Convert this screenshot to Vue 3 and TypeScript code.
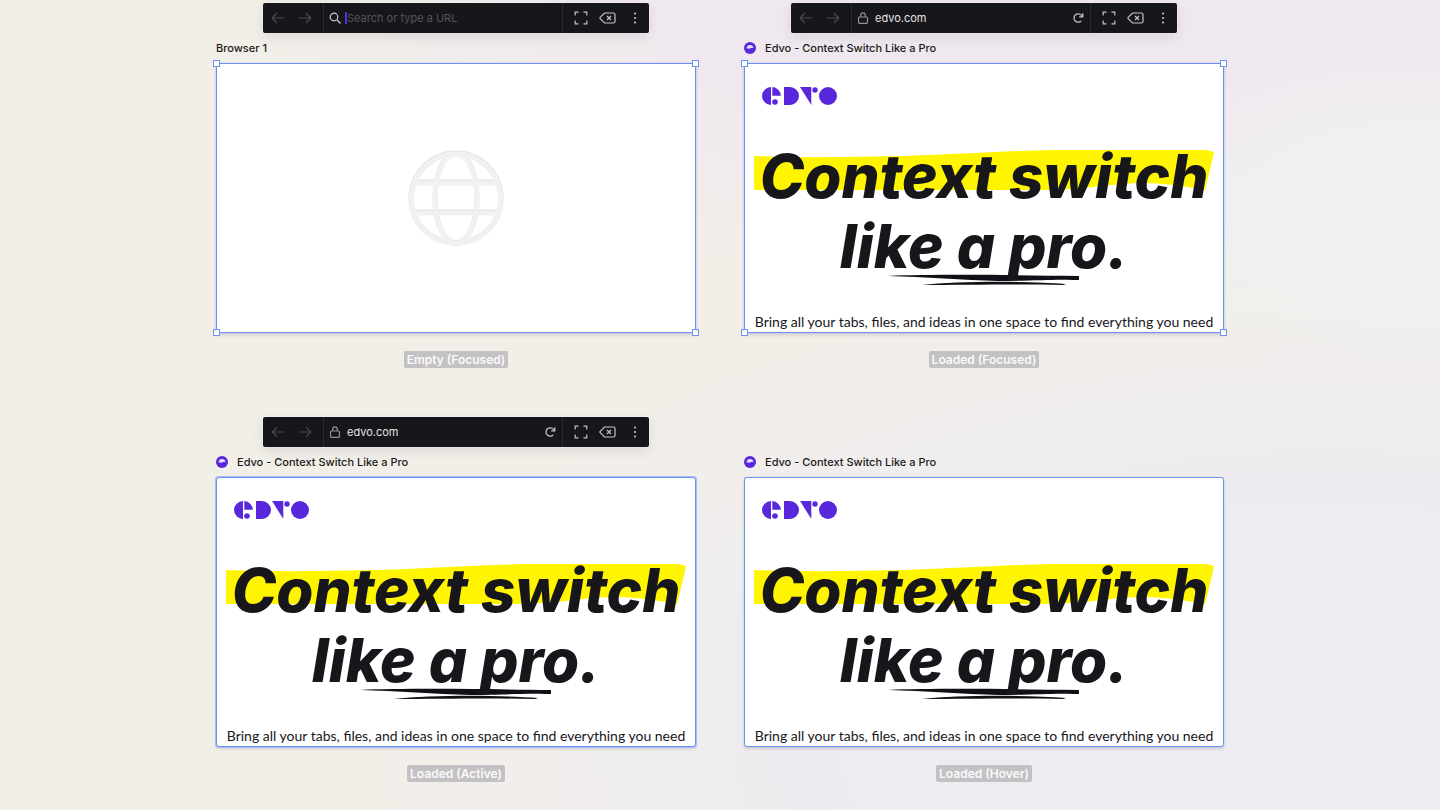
<script setup lang="ts">
interface BrowserCard {
  id: string
  title: string
  caption: string
  url: string
  loaded: boolean
  toolbar: boolean
  state: 'focused' | 'active' | 'hover'
}

const cards: BrowserCard[] = [
  { id: 'empty', title: 'Browser 1', caption: 'Empty (Focused)', url: '', loaded: false, toolbar: true, state: 'focused' },
  { id: 'focused', title: 'Edvo - Context Switch Like a Pro', caption: 'Loaded (Focused)', url: 'edvo.com', loaded: true, toolbar: true, state: 'focused' },
  { id: 'active', title: 'Edvo - Context Switch Like a Pro', caption: 'Loaded (Active)', url: 'edvo.com', loaded: true, toolbar: true, state: 'active' },
  { id: 'hover', title: 'Edvo - Context Switch Like a Pro', caption: 'Loaded (Hover)', url: 'edvo.com', loaded: true, toolbar: false, state: 'hover' },
]
const corners = ['tl', 'tr', 'bl', 'br']
</script>

<template>
  <main class="board">
    <figure v-for="card in cards" :key="card.id" class="card">
      <div class="toolbar-slot">
        <div v-if="card.toolbar" class="toolbar">
          <div class="nav">
            <button type="button" class="tool dim" aria-label="Back">
              <svg width="14" height="14" viewBox="0 0 14 14"><path d="M13 7H1.5M6 2 1.2 7 6 12" /></svg>
            </button>
            <button type="button" class="tool dim" aria-label="Forward">
              <svg width="14" height="14" viewBox="0 0 14 14"><path d="M1 7h11.500M8 2l4.800 5L8 12" /></svg>
            </button>
          </div>
          <div class="address">
            <svg v-if="card.loaded" class="lead lock" width="12" height="12" viewBox="0 0 12 12">
              <rect x="1.500" y="5" width="9" height="6.300" rx="1" />
              <path d="M3.700 5V3.200a2.300 2.300 0 0 1 4.600 0V5" />
            </svg>
            <svg v-else class="lead" width="12" height="12" viewBox="0 0 12 12">
              <circle cx="5" cy="5" r="3.800" /><path d="m8 8 3.500 3.500" />
            </svg>
            <input
              type="text"
              class="url"
              :class="{ editing: !card.loaded }"
              :value="card.url"
              placeholder="Search or type a URL"
              aria-label="Address"
            />
            <button v-if="card.loaded" type="button" class="reload" aria-label="Reload">
              <svg width="12" height="12" viewBox="0 0 12 12"><path d="M9.300 8.800A4.200 4.200 0 1 1 9.300 3.200L10.500 4.600M10.800 1.200v3.700H7.200" /></svg>
            </button>
          </div>
          <div class="tools">
            <button type="button" class="tool" aria-label="Fullscreen">
              <svg width="14" height="14" viewBox="0 0 14 14"><path d="M1.200 4.500V1.200h3.300M9.500 1.200h3.300v3.300M12.800 9.500v3.300H9.500M4.500 12.800H1.200V9.500" /></svg>
            </button>
            <button type="button" class="tool" aria-label="Close browser">
              <svg width="17" height="12" viewBox="0 0 17 12"><path d="M5.500 1h9a1.500 1.500 0 0 1 1.500 1.500v7a1.500 1.500 0 0 1-1.500 1.500h-9L1.200 6.700a1 1 0 0 1 0-1.400zM8 4l4 4M12 4 8 8" /></svg>
            </button>
            <button type="button" class="tool" aria-label="More options">
              <svg class="dots" width="4" height="12" viewBox="0 0 4 12"><circle cx="2" cy="1.500" r="1.100" /><circle cx="2" cy="6" r="1.100" /><circle cx="2" cy="10.500" r="1.100" /></svg>
            </button>
          </div>
        </div>
      </div>

      <header class="title">
        <svg v-if="card.loaded" class="favicon" width="12" height="12" viewBox="0 0 12 12">
          <circle cx="6" cy="6" r="6" fill="#5a28dc" />
          <path d="M2.700 6.500a3.300 3.300 0 0 1 6.600-.4H6.500l-.8 1-.8-.6z" fill="#e4dafc" />
        </svg>
        <span>{{ card.title }}</span>
      </header>

      <div class="frame" :class="card.state">
        <section v-if="card.loaded" class="site">
          <svg class="ink" viewBox="0 0 480 270" aria-hidden="true">
            <path d="M10 93C60 95 110 94 160 93C220 91 260 88 311 87H462L470 89C467 103 464 115 461 127C446 124 420 120 400 120C370 120 340 127 296 127H10Z" fill="#fff500" />
            <path d="M144 213C190 211 270 212 335 213L335 217L329 217C310 216 290 218 254 218C220 217 180 214 144 213Z" fill="#101116" />
            <path d="M178 222C215 218 280 218 322 221L319 222C275 221 220 222 178 222Z" fill="#101116" />
          </svg>
          <svg class="logo" width="75" height="18" viewBox="0 0 75 18" role="img" aria-label="Edvo">
            <path d="M9 0a9 9 0 0 0 0 18zM10.300 0a9 9 0 0 1 8.500 8.700h-8.500zM22 0h6a9 9 0 0 1 0 18h-6zM38 0h11.300v18z" />
            <circle cx="13" cy="15" r="2.800" /><circle cx="53" cy="3" r="2.700" /><circle cx="66" cy="9" r="9" />
          </svg>
          <h1>Context switch<br />like a pro.</h1>
          <p>Bring all your tabs, files, and ideas in one space to find everything you need</p>
        </section>
        <svg v-else class="globe" width="96" height="96" viewBox="0 0 96 96" aria-hidden="true">
          <g class="shade"><circle cx="48" cy="48" r="45" /><ellipse cx="48" cy="48" rx="21" ry="45" /><path d="M6 32h84M6 62h84" /></g>
          <g class="face"><circle cx="48" cy="48.500" r="44.500" /><ellipse cx="48" cy="48.500" rx="21" ry="44.500" /><path d="M6 33h84M6 63h84" /></g>
        </svg>
        <template v-if="card.state === 'focused'">
          <i v-for="corner in corners" :key="corner" class="handle" :class="corner"></i>
        </template>
      </div>

      <figcaption>{{ card.caption }}</figcaption>
    </figure>
  </main>
</template>

<style>
body {
  margin: 0;
}
</style>

<style scoped>
.board {
  box-sizing: border-box;
  min-height: 100vh;
  padding: 3px 24px 24px;
  display: grid;
  grid-template-columns: repeat(2, minmax(0, 480px));
  justify-content: center;
  align-content: start;
  gap: 49px 48px;
  font-family: Inter, "Liberation Sans", sans-serif;
  color: #1b1a20;
  background:
    radial-gradient(ellipse 360px 180px at 98% 25%, #f0f1f1 20%, transparent 100%),
    radial-gradient(ellipse 900px 300px at 80% 0%, #f0e8ef 50%, transparent 100%),
    radial-gradient(ellipse 960px 480px at 92% 92%, #eeebf1 50%, transparent 100%),
    #f2efe9;
}

.card {
  margin: 0;
  display: flex;
  flex-direction: column;
}

.toolbar-slot {
  height: 30px;
  display: flex;
  justify-content: center;
}

.toolbar {
  width: 100%;
  max-width: 386px;
  display: flex;
  border-radius: 2px;
  background: #17161b;
  box-shadow: 0 0 2px rgba(255, 255, 255, 0.8), 0 4px 12px rgba(60, 40, 50, 0.12);
}

.nav,
.tools,
.address {
  display: flex;
  align-items: center;
}

.nav {
  padding: 0 5px 0 1px;
  border-right: 1px solid #2b2a2f;
}

.tools {
  padding: 0 1px 0 4px;
  border-left: 1px solid #2b2a2f;
}

.address {
  flex: 1;
  min-width: 0;
  padding: 0 5px;
  gap: 4px;
}

button {
  display: flex;
  align-items: center;
  justify-content: center;
  flex: none;
  margin: 0;
  padding: 0;
  border: 0;
  background: none;
  color: #c5c4c8;
  cursor: pointer;
}

.tool {
  width: 27px;
  height: 30px;
}

.dim {
  color: #4b4a4f;
}

.toolbar svg {
  flex: none;
  fill: none;
  stroke: currentColor;
  stroke-width: 1.2;
}

.toolbar .lead {
  color: #cfced2;
}

.toolbar .lock {
  color: #929196;
}

.toolbar .dots {
  fill: currentColor;
  stroke: none;
}

.reload {
  width: 14px;
  height: 20px;
}

.url {
  flex: 1;
  min-width: 0;
  height: 12px;
  padding: 0;
  border: 0;
  border-left: 2px solid transparent;
  outline: 0;
  background: none;
  font: 400 11px/12px Inter, "Liberation Sans", sans-serif;
  color: #e4e3e6;
}

.url.editing {
  border-left-color: #5a2fd8;
}

.url::placeholder {
  color: #565559;
  opacity: 1;
}

.title {
  height: 30px;
  display: flex;
  align-items: center;
  gap: 9px;
  font-size: 11px;
  font-weight: 500;
  line-height: 14px;
}

.frame {
  position: relative;
  box-sizing: border-box;
  aspect-ratio: 16 / 9;
  display: flex;
  align-items: center;
  justify-content: center;
  background: #fff;
  border: 1px solid #6d92f2;
  box-shadow: 0 0 1px #9db4f2, 0 2px 3px rgba(40, 30, 50, 0.16);
}

.active,
.hover {
  border-radius: 3px;
}

.active {
  box-shadow: 0 0 0 1px #a9bcf0, 0 2px 3px rgba(40, 30, 50, 0.16);
}

.site {
  position: relative;
  align-self: stretch;
  width: 100%;
  overflow: hidden;
  display: flex;
  flex-direction: column;
}

.ink {
  position: absolute;
  inset: -1px;
}

.logo {
  margin: 23px 17px 0;
  fill: #5a28dc;
}

h1 {
  position: relative;
  margin: 36px 0 0;
  font: italic 800 60px/70px Inter, "Liberation Sans", sans-serif;
  text-align: center;
  white-space: nowrap;
  color: #17161b;
}

p {
  position: relative;
  margin: 32px 0 0;
  font: 400 14px/18px Lato, "Liberation Sans", sans-serif;
  text-align: center;
  white-space: nowrap;
  color: #17161b;
}

.globe {
  fill: none;
  stroke-width: 5;
}

.shade {
  stroke: #e2dee1;
}

.face {
  stroke: #f2f0f2;
}

.handle {
  position: absolute;
  box-sizing: border-box;
  width: 7px;
  height: 7px;
  border: 1px solid #6d92f2;
  background: #fff;
}

.tl,
.tr {
  top: -4px;
}

.bl,
.br {
  bottom: -4px;
}

.tl,
.bl {
  left: -4px;
}

.tr,
.br {
  right: -4px;
}

figcaption {
  align-self: center;
  margin-top: 18px;
  padding: 0 3px;
  border-radius: 2px;
  background: #c4c1c4;
  color: #fbfafb;
  font-size: 12px;
  font-weight: 600;
  line-height: 17px;
}
</style>
